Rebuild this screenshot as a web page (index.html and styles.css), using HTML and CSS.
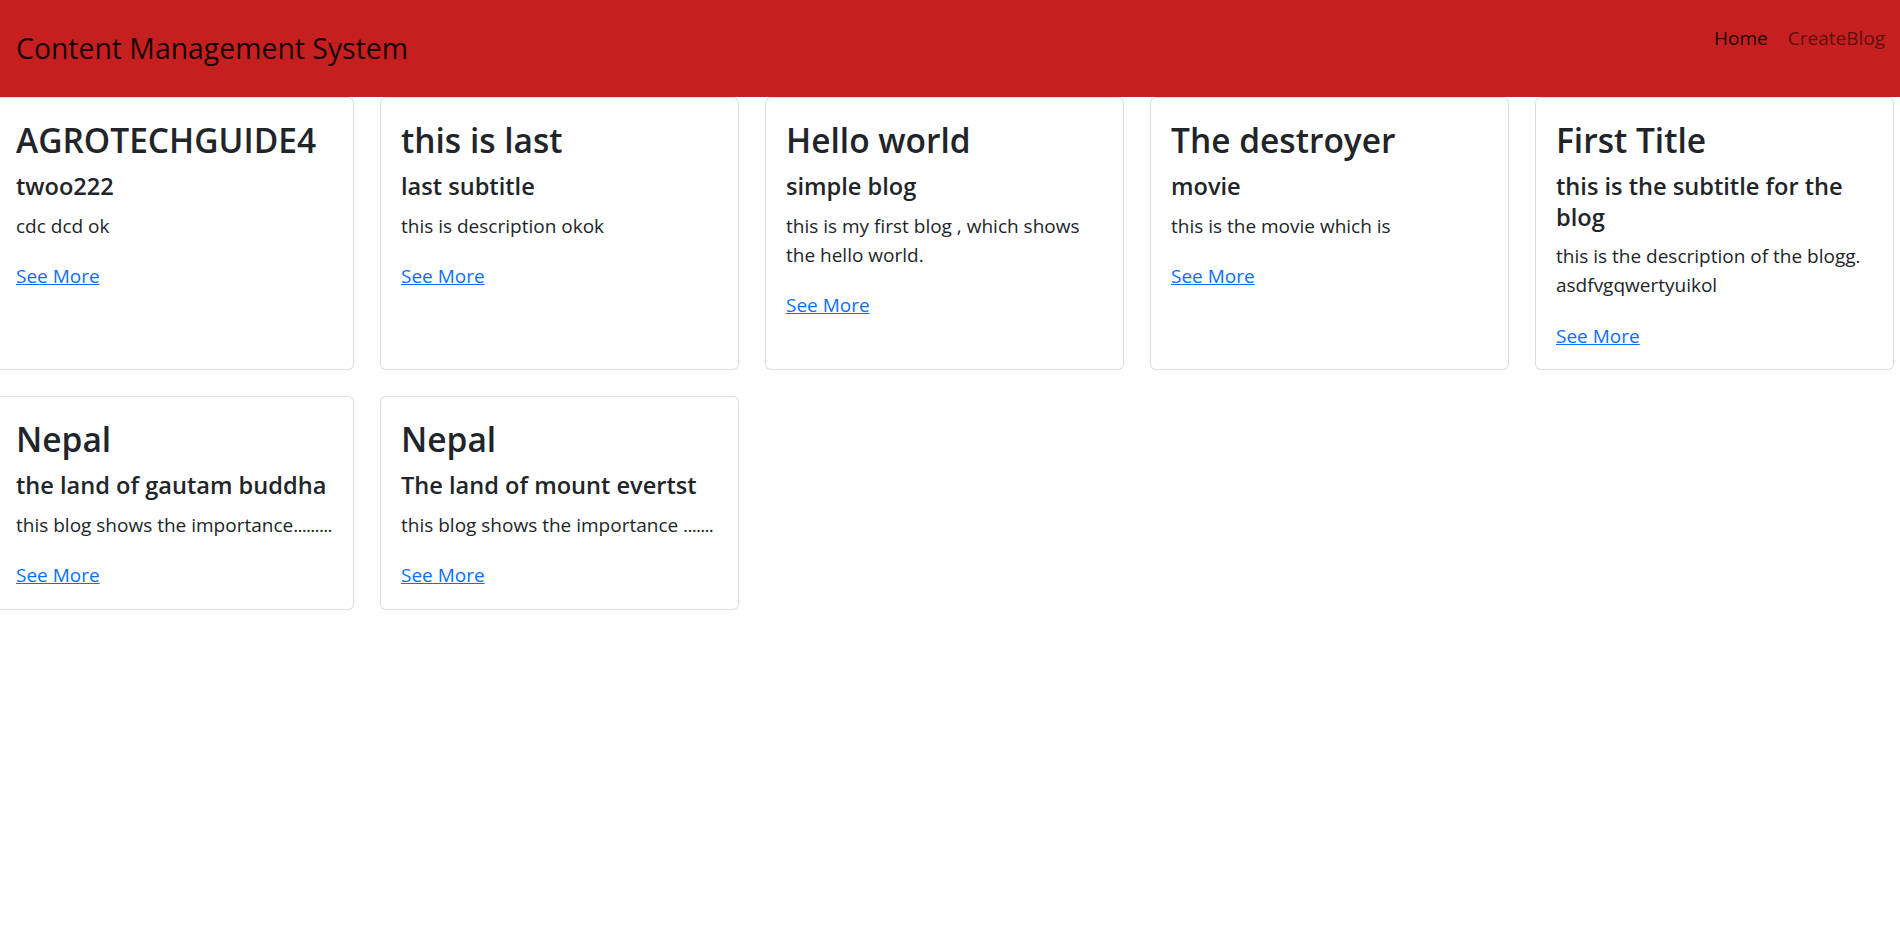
FILE: index.html
```html
<!DOCTYPE html>
<html lang="en">
<head>
<meta charset="utf-8">
<title>Content Management System</title>
<link rel="stylesheet" href="styles.css">
</head>
<body>
<header class="navbar">
  <a class="brand" href="#">Content Management System</a>
  <nav class="nav">
    <a class="nav-link active" href="#">Home</a>
    <a class="nav-link" href="#">CreateBlog</a>
  </nav>
</header>
<main class="cards">
  <article class="card">
    <h2 class="card-title">AGROTECHGUIDE4</h2>
    <h5 class="card-subtitle">twoo222</h5>
    <p class="card-text">cdc dcd ok</p>
    <a class="card-link" href="#">See More</a>
  </article>
  <article class="card">
    <h2 class="card-title">this is last</h2>
    <h5 class="card-subtitle">last subtitle</h5>
    <p class="card-text">this is description okok</p>
    <a class="card-link" href="#">See More</a>
  </article>
  <article class="card">
    <h2 class="card-title">Hello world</h2>
    <h5 class="card-subtitle">simple blog</h5>
    <p class="card-text">this is my first blog , which shows the hello world.</p>
    <a class="card-link" href="#">See More</a>
  </article>
  <article class="card">
    <h2 class="card-title">The destroyer</h2>
    <h5 class="card-subtitle">movie</h5>
    <p class="card-text">this is the movie which is</p>
    <a class="card-link" href="#">See More</a>
  </article>
  <article class="card">
    <h2 class="card-title">First Title</h2>
    <h5 class="card-subtitle">this is the subtitle for the blog</h5>
    <p class="card-text">this is the description of the blogg. asdfvgqwertyuikol</p>
    <a class="card-link" href="#">See More</a>
  </article>
  <article class="card">
    <h2 class="card-title">Nepal</h2>
    <h5 class="card-subtitle">the land of gautam buddha</h5>
    <p class="card-text">this blog shows the importance<span class="dots">.........</span></p>
    <a class="card-link" href="#">See More</a>
  </article>
  <article class="card">
    <h2 class="card-title">Nepal</h2>
    <h5 class="card-subtitle">The land of mount evertst</h5>
    <p class="card-text">this blog shows the importance <span class="dots">.......</span></p>
    <a class="card-link" href="#">See More</a>
  </article>
</main>
</body>
</html>
```
FILE: styles.css
```css
html, body {
  margin: 0;
  padding: 0;
  background: #fff;
}
body {
  font-family: "Open Sans", "Noto Sans", sans-serif;
  color: #212529;
  overflow-x: hidden;
}
.navbar {
  display: flex;
  justify-content: space-between;
  align-items: flex-start;
  height: 97px;
  box-sizing: border-box;
  background: #c61f1f;
}
.brand {
  margin: 30px 0 0 16px;
  font-size: 28.4px;
  line-height: 36px;
  color: rgba(0, 0, 0, 0.9);
  text-decoration: none;
}
.nav {
  display: flex;
  gap: 20px;
  margin: 24px 15px 0 0;
}
.nav-link {
  font-size: 19px;
  line-height: 29px;
  color: rgba(0, 0, 0, 0.55);
  text-decoration: none;
}
.nav-link.active {
  color: rgba(0, 0, 0, 0.9);
}
.cards {
  display: grid;
  grid-template-columns: repeat(5, 359px);
  column-gap: 26px;
  row-gap: 26px;
  margin-left: -5px;
}
.card {
  display: flex;
  flex-direction: column;
  align-items: flex-start;
  border: 1px solid rgba(0, 0, 0, 0.13);
  border-radius: 6px;
  padding: 21px 20px 18px;
  background: #fff;
}
.card-title {
  margin: 0 0 10px;
  font-size: 33.5px;
  line-height: 42px;
  font-weight: 600;
}
.card-subtitle {
  margin: 0 0 10px;
  font-size: 23.6px;
  line-height: 30.5px;
  font-weight: 600;
}
.card-text {
  margin: 0 0 21px;
  font-size: 19px;
  line-height: 29.4px;
}
.dots {
  letter-spacing: -0.7px;
}
.card-link {
  font-size: 19px;
  line-height: 29.4px;
  color: #0d6efd;
  text-decoration: underline;
}
```
